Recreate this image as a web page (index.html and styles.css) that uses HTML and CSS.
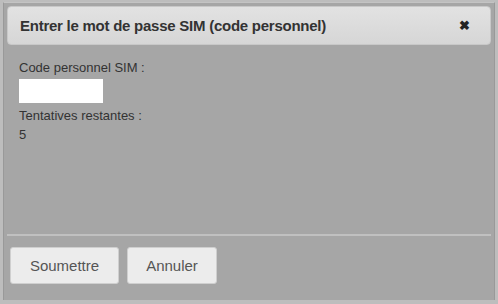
FILE: index.html
```html
<!DOCTYPE html>
<html>
<head>
<meta charset="utf-8">
<link rel="stylesheet" href="styles.css">
</head>
<body>
<div class="dialog">
  <div class="header">
    <span class="title">Entrer le mot de passe SIM (code personnel)</span>
    <span class="close">&#10006;</span>
  </div>
  <div class="content">
    <div class="label">Code personnel SIM :</div>
    <div class="input"></div>
    <div class="label">Tentatives restantes :</div>
    <div class="label">5</div>
  </div>
  <div class="footer">
    <button class="btn btn-submit">Soumettre</button>
    <button class="btn btn-cancel">Annuler</button>
  </div>
</div>
</body>
</html>
```
FILE: styles.css
```css
html, body {
  margin: 0;
  padding: 0;
  width: 498px;
  height: 304px;
  background: #bdbdbd;
  overflow: hidden;
  font-family: "Liberation Sans", Arial, sans-serif;
}
.dialog {
  margin: 2px 3px 0 3px;
  height: 298px;
  background: #a6a6a6;
  border-left: 1px solid #999;
  border-right: 1px solid #999;
  border-top: 1px solid #c4c4c4;
  box-sizing: border-box;
  padding: 3px 3px 0 3px;
  display: flex;
  flex-direction: column;
}
.header {
  height: 39px;
  flex: none;
  background: linear-gradient(#e2e2e2, #d6d6d6);
  border: 1px solid #c8c8c8;
  border-radius: 4px;
  display: flex;
  align-items: center;
  justify-content: space-between;
  padding: 0 20px 0 12px;
  box-sizing: border-box;
}
.title {
  font-weight: bold;
  font-size: 15px;
  color: #333;
  letter-spacing: -0.25px;
}
.close {
  font-size: 13px;
  font-weight: bold;
  color: #222;
}
.content {
  padding: 15px 12px 0 12px;
  height: 191px;
  flex: none;
  box-sizing: border-box;
  border-bottom: 2px solid #c0c0c0;
}
.label {
  font-size: 13px;
  color: #333;
  line-height: 15px;
  margin-bottom: 4px;
}
.input {
  width: 84px;
  height: 24px;
  background: #fff;
  margin: 2px 0 5px 0;
}
.footer {
  display: flex;
  gap: 8px;
  padding: 11px 0 0 3px;
}
.btn {
  height: 37px;
  border: 1px solid #cfcfcf;
  border-radius: 3px;
  background: #ececec;
  font-family: "Liberation Sans", Arial, sans-serif;
  font-size: 15px;
  color: #555;
  padding: 0;
}
.btn-submit { width: 109px; }
.btn-cancel { width: 90px; }
```
